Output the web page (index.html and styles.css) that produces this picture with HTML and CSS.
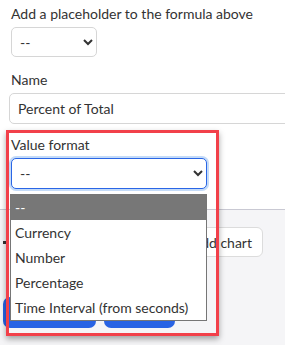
FILE: index.html
```html
<!DOCTYPE html>
<html>
<head>
    <title>Formula field</title>
    <link rel="stylesheet" href="styles.css">
</head>
<body>
    <div class="form">
        <div class="field">
            <label class="label">Add a placeholder to the formula above</label>
            <select class="select small">
                <option>--</option>
            </select>
        </div>

        <div class="field">
            <label class="label">Name</label>
            <input class="input" type="text" value="Percent of Total">
        </div>

        <div class="field">
            <label class="label">Value format</label>
            <select class="select wide focused">
                <option>--</option>
            </select>
        </div>
    </div>

    <div class="footer">
        <div class="toolbar">
            <span class="dot"></span>
            <button class="chart-btn">+ Add chart</button>
        </div>
        <div class="actions">
            <button class="primary first">Save</button>
            <button class="primary">Cancel</button>
        </div>
    </div>

    <!-- open dropdown of the value format select -->
    <ul class="menu">
        <li class="selected">--</li>
        <li>Currency</li>
        <li>Number</li>
        <li>Percentage</li>
        <li>Time Interval (from seconds)</li>
    </ul>

    <div class="highlight"></div>
</body>
</html>
```

FILE: styles.css
```css
body {
    margin: 0;
    font-family: Lato, "Open Sans", sans-serif;
    font-size: 14px;
    color: #333;
    background: #f5f5f7;
    overflow: hidden;
}
.form {
    background: white;
    padding: 4px 0 20px 11px;
}
.field {
    margin-bottom: 13px;
}
.field:nth-child(2) {
    margin-bottom: 11px;
}
.field:last-child {
    margin-bottom: 0;
}
.label {
    display: block;
    line-height: 20px;
    margin-bottom: 3px;
}
.select {
    display: block;
    height: 31px;
    font-family: Lato, sans-serif;
    font-size: 14px;
    color: #333;
    background: white;
    border: 1px solid #d6d6d6;
    border-radius: 5px;
    padding: 0 4px;
    outline: none;
}
.small {
    width: 86px;
    height: 30px;
}
.wide {
    width: 196px;
}
.focused {
    border-color: #2a66e6;
    box-shadow: 0 0 0 2px #c4dbf8;
}
.input {
    display: block;
    box-sizing: border-box;
    width: 290px;
    height: 31px;
    margin-left: -2px;
    padding: 0 8px;
    font-family: Lato, sans-serif;
    font-size: 14px;
    color: #333;
    border: 1px solid #d6d6d6;
    border-radius: 5px;
}
.footer {
    border-top: 1px solid #c9c9d3;
    background: #f5f5f7;
    height: 140px;
}
.toolbar {
    display: flex;
    justify-content: space-between;
    align-items: center;
    height: 30px;
    padding: 17px 22px 0 3px;
}
.dot {
    width: 3px;
    height: 3px;
    background: #333;
}
.chart-btn {
    height: 30px;
    padding: 0 10px;
    font-family: Lato, sans-serif;
    font-size: 14px;
    color: #333;
    background: white;
    border: 1px solid #dcdcdc;
    border-radius: 6px;
}
.actions {
    display: flex;
    align-items: flex-start;
    gap: 8px;
    padding: 40px 0 0 3px;
}
.primary {
    height: 31px;
    border: none;
    border-radius: 7px;
    background: #2863e4;
    color: white;
    font-family: Lato, sans-serif;
    font-size: 14px;
    white-space: nowrap;
    width: 71px;
}
.primary.first {
    width: 93px;
}
.menu {
    position: absolute;
    left: 10px;
    top: 194px;
    width: 195px;
    margin: 0;
    padding: 0;
    list-style: none;
    background: white;
    border: 1px solid #767676;
}
.menu li {
    height: 25px;
    line-height: 25px;
    padding-left: 4px;
    color: #333;
}
.menu li.selected {
    background: #777;
    color: white;
}
.highlight {
    position: absolute;
    left: 6px;
    top: 130px;
    width: 207px;
    height: 200px;
    border: 3px solid #f2404a;
    box-shadow: 0 3px 6px rgba(0,0,0,0.35);
}
```
